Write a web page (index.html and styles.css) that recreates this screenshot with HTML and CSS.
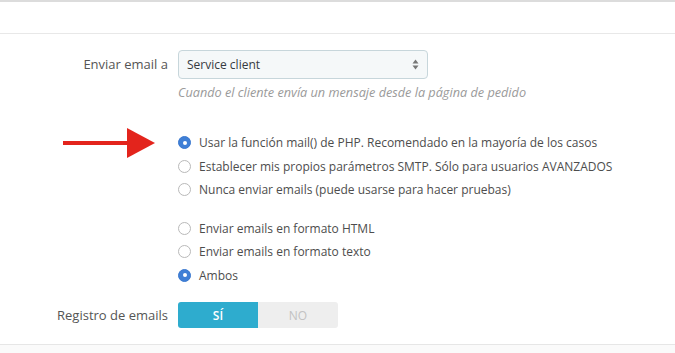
FILE: index.html
```html
<!DOCTYPE html>
<html>
<head>
<meta charset="utf-8">
<link rel="stylesheet" href="styles.css">
</head>
<body>
<div class="topbar"></div>
<div class="panel">
  <div class="row row-select">
    <label class="label">Enviar email a</label>
    <div class="field">
      <div class="select">
        <span>Service client</span>
        <svg class="updown" width="7" height="11" viewBox="0 0 7 11"><path d="M3.5 0.5 L6.5 4.5 H0.5 Z M3.5 10.5 L0.5 6.5 H6.5 Z" fill="#777"/></svg>
      </div>
      <p class="help">Cuando el cliente envía un mensaje desde la página de pedido</p>
    </div>
  </div>

  <div class="row row-radios1">
    <div class="label arrow-cell">
      <svg class="arrow" width="96" height="32" viewBox="0 0 96 32"><rect x="0" y="14" width="66" height="4" fill="#e3241c"/><path d="M64 1 L92 16 L64 31 Z" fill="#e3241c"/></svg>
    </div>
    <div class="field radios">
      <div class="radio"><span class="dot on"></span>Usar la función mail() de PHP. Recomendado en la mayoría de los casos</div>
      <div class="radio"><span class="dot"></span>Establecer mis propios parámetros SMTP. Sólo para usuarios AVANZADOS</div>
      <div class="radio"><span class="dot"></span>Nunca enviar emails (puede usarse para hacer pruebas)</div>
    </div>
  </div>

  <div class="row row-radios2">
    <div class="label"></div>
    <div class="field radios">
      <div class="radio"><span class="dot"></span>Enviar emails en formato HTML</div>
      <div class="radio"><span class="dot"></span>Enviar emails en formato texto</div>
      <div class="radio"><span class="dot on"></span>Ambos</div>
    </div>
  </div>

  <div class="row row-toggle">
    <label class="label">Registro de emails</label>
    <div class="field">
      <div class="toggle"><span class="yes">SÍ</span><span class="no">NO</span></div>
    </div>
  </div>
</div>
<div class="footer"></div>
</body>
</html>
```

FILE: styles.css
```css
html, body {
  margin: 0;
  padding: 0;
  background: #fff;
  font-family: "Open Sans", "Noto Sans", sans-serif;
  font-size: 13px;
  color: #555;
}
.topbar {
  height: 31px;
  border-top: 2px solid #dcdcdc;
  border-bottom: 1px solid #e8e8e8;
  background: #fff;
}
.panel {
  padding-top: 16px;
  height: 294px;
  border-bottom: 1px solid #e6e6e6;
}
.row {
  display: flex;
}
.label {
  width: 168px;
  flex: none;
  text-align: right;
  padding-right: 10px;
  box-sizing: content-box;
  color: #555;
  font-size: 13px;
}
.row-select .label {
  line-height: 29px;
}
.field {
  flex: 1;
}
.select {
  width: 250px;
  height: 29px;
  box-sizing: border-box;
  border: 1px solid #c7d6db;
  border-radius: 4px;
  background: #f5f8f9;
  display: flex;
  align-items: center;
  justify-content: space-between;
  padding: 0 8px 0 8px;
  color: #363a41;
  font-size: 12px;
}
.updown {
  display: block;
}
.help {
  margin: 5px 0 0 0;
  font-style: italic;
  font-size: 12.7px;
  color: #9a9a9a;
  line-height: 17px;
}
.row-radios1 {
  margin-top: 30px;
}
.arrow-cell {
  position: relative;
}
.arrow {
  position: absolute;
  left: 63px;
  top: -4px;
}
.radios {
  display: flex;
  flex-direction: column;
}
.radio {
  display: flex;
  align-items: center;
  height: 23.5px;
  color: #4d4d4d;
  font-size: 12px;
  white-space: nowrap;
}
.dot {
  width: 11px;
  height: 11px;
  border: 1px solid #b9b9b9;
  border-radius: 50%;
  background: #fff;
  margin-right: 8px;
  box-sizing: content-box;
  flex: none;
  position: relative;
}
.dot.on {
  background: #3f7fd6;
  border-color: #3a78cf;
}
.dot.on::after {
  content: "";
  position: absolute;
  width: 4px;
  height: 4px;
  border-radius: 50%;
  background: #fff;
  left: 3.5px;
  top: 3.5px;
}
.row-radios2 {
  margin-top: 15px;
}
.row-toggle {
  margin-top: 15px;
}
.row-toggle .label {
  line-height: 26px;
}
.toggle {
  display: flex;
  width: 160px;
  height: 26px;
  border-radius: 3px;
  overflow: hidden;
  font-size: 12px;
}
.toggle span {
  flex: 1;
  display: flex;
  align-items: center;
  justify-content: center;
}
.yes {
  background: #2eacce;
  color: #fff;
  font-weight: 600;
}
.no {
  background: #eeeeee;
  color: #c2c2c2;
}
.footer {
  height: 20px;
  background: #fafafa;
}
```
